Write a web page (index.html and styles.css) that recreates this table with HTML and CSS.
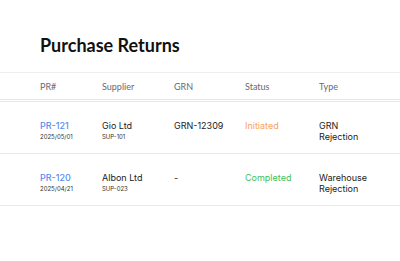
FILE: index.html
```html
<!DOCTYPE html>
<html>
<head>
<meta charset="utf-8">
<link rel="stylesheet" href="styles.css">
</head>
<body>
<div class="page">
  <h1 class="title">Purchase Returns</h1>
  <div class="table">
    <div class="row head">
      <div class="c c1">PR#</div>
      <div class="c c2">Supplier</div>
      <div class="c c3">GRN</div>
      <div class="c c4">Status</div>
      <div class="c c5">Type</div>
    </div>
    <div class="row body">
      <div class="c c1"><div class="pr">PR-121</div><div class="sub">2025/05/01</div></div>
      <div class="c c2"><div class="sup">Gio Ltd</div><div class="sub">SUP-101</div></div>
      <div class="c c3 grn">GRN-12309</div>
      <div class="c c4 st initiated">Initiated</div>
      <div class="c c5 type">GRN<br>Rejection</div>
    </div>
    <div class="row body">
      <div class="c c1"><div class="pr">PR-120</div><div class="sub">2025/04/21</div></div>
      <div class="c c2"><div class="sup">Albon Ltd</div><div class="sub">SUP-023</div></div>
      <div class="c c3 grn">-</div>
      <div class="c c4 st completed">Completed</div>
      <div class="c c5 type">Warehouse<br>Rejection</div>
    </div>
  </div>
</div>
</body>
</html>
```
FILE: styles.css
```css
html, body { margin: 0; padding: 0; background: #fff; }
body { font-family: Inter, "Noto Sans", sans-serif; color: #222; }
.page { width: 400px; }
.title {
  font-family: Lato, sans-serif;
  font-weight: 700;
  font-size: 18px;
  line-height: 24px;
  margin: 0;
  padding: 33px 0 0 40px;
  color: #111;
  height: 39px;
}
.table { border-top: 1px solid #eeeff2; }
.row { display: grid; grid-template-columns: 102px 72px 71px 74px 81px; }
.c:first-child { padding-left: 40px; }
.head { height: 26px; align-items: center; border-bottom: 3px double #e6e8ee; font-family: Lato, sans-serif; font-size: 9px; color: #666a73; }
.body { height: 33px; padding-top: 18px; align-items: start; border-bottom: 1px solid #e8e9ec; line-height: 11px; }
.pr { color: #5a8ef0; font-size: 9px; font-weight: 500; }
.sub { font-size: 6px; color: #333; }
.sup { font-size: 9px; color: #222; }
.grn { font-size: 9px; color: #222; }
.st { font-size: 9px; }
.initiated { color: #f6a35e; }
.completed { color: #3fbf55; }
.type { font-size: 9px; color: #222; }
```
